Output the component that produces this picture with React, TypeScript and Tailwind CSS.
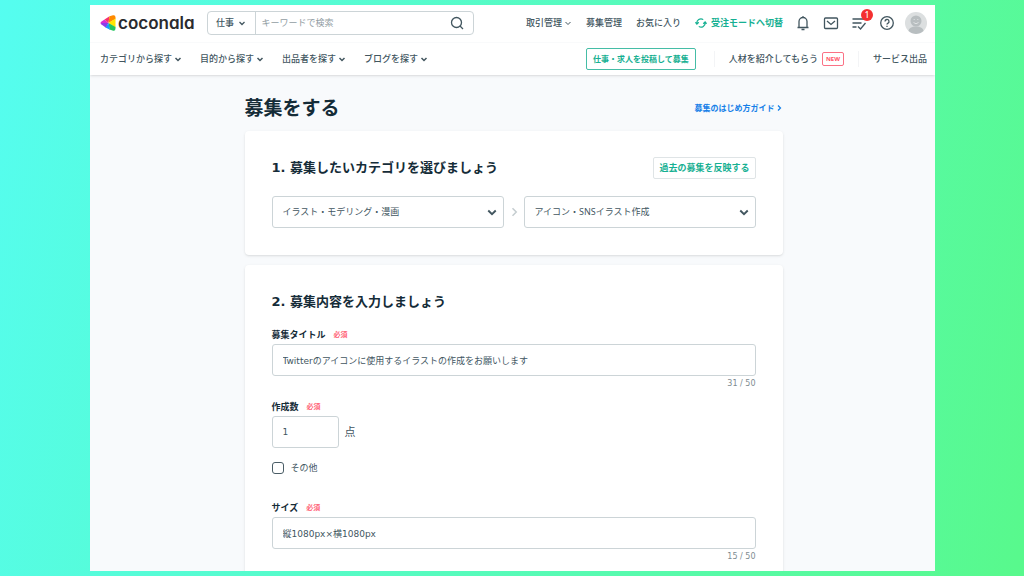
import type { ReactNode } from "react";

const chevronPath = "M3 6l5 5 5-5";

function Chevron({ className }: { className: string }) {
  return (
    <svg viewBox="0 0 16 16" className={className} fill="none" stroke="currentColor" aria-hidden="true">
      <path d={chevronPath} />
    </svg>
  );
}

function Logo() {
  return (
    <a href="#" className="flex items-center gap-0.5 text-[#2b2b2e]">
      <svg viewBox="0 0 32 32" className="size-4" aria-hidden="true">
        <path d="M3 13Q-1 16 3 19L17 16L9 9Z" fill="#d92fd0" />
        <path d="M3 19L12 25.500L17 16L3 16Z" fill="#8b3fe8" />
        <path d="M9 9L19 2.500L17 16Z" fill="#f6336f" />
        <path d="M19 2.500L26 0.500Q31 -.5 31 5L31 8L17 16Z" fill="#ff8a00" />
        <path d="M31 7L31 25L17 16Z" fill="#ffe600" />
        <path d="M17 16L31 24L31 27Q31 33 25 31L19 29Z" fill="#22c55e" />
        <path d="M17 16L20 29.500L11 25Z" fill="#159bff" />
      </svg>
      <span className="font-[Inter,sans-serif] text-[17px] leading-5 font-semibold [font-feature-settings:'cv11']">coconala</span>
    </a>
  );
}

function MenuButton({ children }: { children: ReactNode }) {
  return (
    <button type="button" className="flex items-center gap-0.5">
      {children}
      <Chevron className="size-2 stroke-[3]" />
    </button>
  );
}

function Header() {
  return (
    <header className="relative bg-white text-[9px] leading-4 whitespace-nowrap shadow-sm">
      <div className="flex h-[38px] items-center justify-between border-b border-gray-50 pr-2 pb-0.5 pl-2.5">
        <div className="flex items-center gap-3">
          <Logo />
          <form className="flex h-6 w-[267px] items-center rounded border border-[#ccd4d7]" onSubmit={(e) => e.preventDefault()}>
            <button type="button" className="flex h-full w-12 items-center justify-center gap-1 border-r border-[#ccd4d7] font-medium">
              仕事
              <Chevron className="size-2 stroke-[2.5]" />
            </button>
            <input aria-label="キーワードで検索" placeholder="キーワードで検索" className="min-w-0 flex-1 px-1.5 outline-none placeholder:text-[#929da3]" />
            <button type="submit" aria-label="検索" className="px-2">
              <svg viewBox="0 0 16 16" className="size-4" fill="none" stroke="currentColor" strokeWidth="1.300">
                <circle cx="7.500" cy="7.500" r="5" />
                <path d="M11 11l3 3" />
              </svg>
            </button>
          </form>
        </div>
        <div className="flex items-center gap-3">
          <nav className="flex items-center gap-3.5 font-medium">
            <button type="button" className="flex items-center gap-0.5">
              取引管理
              <Chevron className="size-2 stroke-2" />
            </button>
            <a href="#">募集管理</a>
            <a href="#">お気に入り</a>
            <a href="#" className="flex items-center gap-1 font-bold text-[#16b092]">
              <svg viewBox="0 0 16 16" className="size-3" fill="none" stroke="currentColor" strokeWidth="1.600" aria-hidden="true">
                <path d="M2.500 9A5.500 5.500 0 0 1 11 3.500M13.500 7A5.500 5.500 0 0 1 5 12.500M0.500 7l2 2.500L5 7M11 9l2.500-2.500L15.500 9" />
              </svg>
              受注モードへ切替
            </a>
          </nav>
          <button type="button" aria-label="お知らせ">
            <svg viewBox="0 0 16 16" className="size-4" fill="none" stroke="currentColor" strokeWidth="1.300">
              <path d="M2.500 12.500h11M4 12.500V6.500a4 4 0 0 1 8 0v6M8 1v1.500M6.500 14.500h3" />
            </svg>
          </button>
          <button type="button" aria-label="メッセージ">
            <svg viewBox="0 0 16 16" className="size-4" fill="none" stroke="currentColor" strokeWidth="1.300">
              <rect x="1.500" y="3" width="13" height="10.500" rx="1" />
              <path d="M4 6l4 3.500L12 6" />
            </svg>
          </button>
          <button type="button" aria-label="やることリスト 1件" className="relative">
            <svg viewBox="0 0 16 16" className="size-4" fill="none" stroke="currentColor" strokeWidth="1.300">
              <path d="M1.500 4h13M1.500 8h9M1.500 12h4M7 11.500l2.500 2.500 5-6" />
            </svg>
            <span className="absolute -top-1.5 -right-1.5 size-3 rounded-full bg-[#f43030] text-center text-[8px] leading-3 font-medium text-white">1</span>
          </button>
          <button type="button" aria-label="ヘルプ">
            <svg viewBox="0 0 16 16" className="size-4" fill="none" stroke="currentColor" strokeWidth="1.300">
              <circle cx="8" cy="8" r="6.300" />
              <path d="M6 6.500a2 2 0 1 1 2.800 1.800Q8 8.700 8 9.500M8 10.700v1.300" />
            </svg>
          </button>
          <button type="button" aria-label="アカウント" className="-ml-0.5">
            <svg viewBox="0 0 22 22" className="size-[22px]">
              <circle cx="11" cy="11" r="11" fill="#dcdfe0" />
              <path d="M3.500 19Q4 14.500 11 14.500T18.500 19A11 11 0 0 1 3.500 19Z" fill="#b8bec0" />
              <circle cx="11" cy="9" r="5.500" fill="#b8bec0" />
              <path d="M9.200 7v1M12.800 7v1M8.500 10.500q2.500 2.500 5 0" stroke="#dfe2e3" fill="none" />
            </svg>
          </button>
        </div>
      </div>
      <div className="flex h-8 items-center justify-between px-2">
        <nav className="flex items-center gap-[18px] pl-0.5 font-medium">
          <MenuButton>カテゴリから探す</MenuButton>
          <MenuButton>目的から探す</MenuButton>
          <MenuButton>出品者を探す</MenuButton>
          <MenuButton>ブログを探す</MenuButton>
        </nav>
        <div className="flex items-center font-medium">
          <button type="button" className="h-[22px] rounded-xs border border-[#45bda6] px-1.5 text-[8px] font-bold text-[#16b092]">仕事・求人を投稿して募集</button>
          <span className="mr-3.5 ml-[18px] h-4 w-px bg-gray-100" />
          <a href="#" className="flex items-center gap-1">
            人材を紹介してもらう
            <span className="rounded-xs border border-[#fb7185] px-[3px] text-[6px] leading-3 font-bold text-[#ff5265]">NEW</span>
          </a>
          <span className="mx-3.5 h-4 w-px bg-gray-100" />
          <a href="#">サービス出品</a>
        </div>
      </div>
    </header>
  );
}

function CategorySelect({ label, value }: { label: string; value: string }) {
  return (
    <div className="relative flex-1">
      <select aria-label={label} className="h-8 w-full appearance-none rounded-[3px] border border-[#ccd4d7] bg-white px-2.5 text-[9px]">
        <option>{value}</option>
      </select>
      <Chevron className="pointer-events-none absolute top-2.5 right-1.5 size-3 stroke-[2.5]" />
    </div>
  );
}

function SectionTitle({ children }: { children: ReactNode }) {
  return (
    <h2 className="font-['DejaVu_Sans','Noto_Sans_CJK_JP',sans-serif] text-[13px] leading-5 font-bold text-[#152c38]">{children}</h2>
  );
}

function FieldLabel({ htmlFor, children }: { htmlFor: string; children: ReactNode }) {
  return (
    <label htmlFor={htmlFor} className="flex items-center gap-2 text-[9px] leading-[18px] font-bold text-[#152c38]">
      {children}
      <span className="text-[7px] text-[#ff6478]">必須</span>
    </label>
  );
}

function Counter({ children }: { children: ReactNode }) {
  return (
    <p className="text-right font-['DejaVu_Sans',sans-serif] text-[8px] leading-4 text-[#7e8b91]">{children}</p>
  );
}

const inputClass =
  "block h-8 rounded-[3px] border border-[#ccd4d7] bg-white px-2.5 font-['DejaVu_Sans','Noto_Sans_CJK_JP',sans-serif] text-[9px]";

export default function App() {
  return (
    <div className="h-screen overflow-hidden bg-linear-[105deg] from-[#55fdf0] to-[#58f98c] pt-[5px] pr-[89px] pb-[5px] pl-[90px] font-['Noto_Sans','Noto_Sans_CJK_JP',sans-serif] text-[#42565f]">
      <div className="h-full overflow-hidden bg-[#f8fafc]">
        <Header />
        <main className="mx-auto max-w-[540px] pl-0.5">
          <div className="flex items-center justify-between pt-5 pb-2.5">
            <h1 className="text-[19px] leading-[26px] font-bold text-[#152c38]">募集をする</h1>
            <a href="#" className="flex items-center text-[8px] font-bold text-[#1680e8]">
              募集のはじめ方ガイド
              <Chevron className="size-2 -rotate-90 stroke-[2.5]" />
            </a>
          </div>
          <section className="rounded bg-white px-[27px] pt-[26px] pb-[27px] shadow-sm">
            <div className="flex items-center justify-between">
              <SectionTitle>1. 募集したいカテゴリを選びましょう</SectionTitle>
              <button type="button" className="h-[22px] rounded-xs border border-[#dfe4e6] px-[5px] text-[9px] font-bold text-[#16b092]">過去の募集を反映する</button>
            </div>
            <div className="mt-[17px] flex items-center">
              <CategorySelect label="カテゴリ" value="イラスト・モデリング・漫画" />
              <Chevron className="mx-1 size-3 -rotate-90 stroke-2 text-[#c5cdd0]" />
              <CategorySelect label="サブカテゴリ" value="アイコン・SNSイラスト作成" />
            </div>
          </section>
          <section className="mt-2.5 rounded bg-white px-[27px] pt-[27px] pb-7 shadow-sm">
            <SectionTitle>2. 募集内容を入力しましょう</SectionTitle>
            <div className="mt-3.5">
              <FieldLabel htmlFor="title">募集タイトル</FieldLabel>
              <input id="title" className={`${inputClass} w-full`} defaultValue="Twitterのアイコンに使用するイラストの作成をお願いします" />
              <Counter>31 / 50</Counter>
            </div>
            <div className="mt-1.5">
              <FieldLabel htmlFor="quantity">作成数</FieldLabel>
              <div className="flex items-center gap-1.5">
                <input id="quantity" className={`${inputClass} w-[67px]`} defaultValue="1" />
                <span className="text-[11px] leading-4">点</span>
              </div>
              <label className="mt-3 flex items-center gap-[7px] text-[9px] leading-4">
                <input type="checkbox" className="size-3 appearance-none rounded-[3px] border border-[#4a5d66] bg-white checked:bg-[#16b092]" />
                その他
              </label>
            </div>
            <div className="mt-[23px]">
              <FieldLabel htmlFor="size">サイズ</FieldLabel>
              <input id="size" className={`${inputClass} w-full`} defaultValue="縦1080px×横1080px" />
              <Counter>15 / 50</Counter>
            </div>
          </section>
        </main>
      </div>
    </div>
  );
}
